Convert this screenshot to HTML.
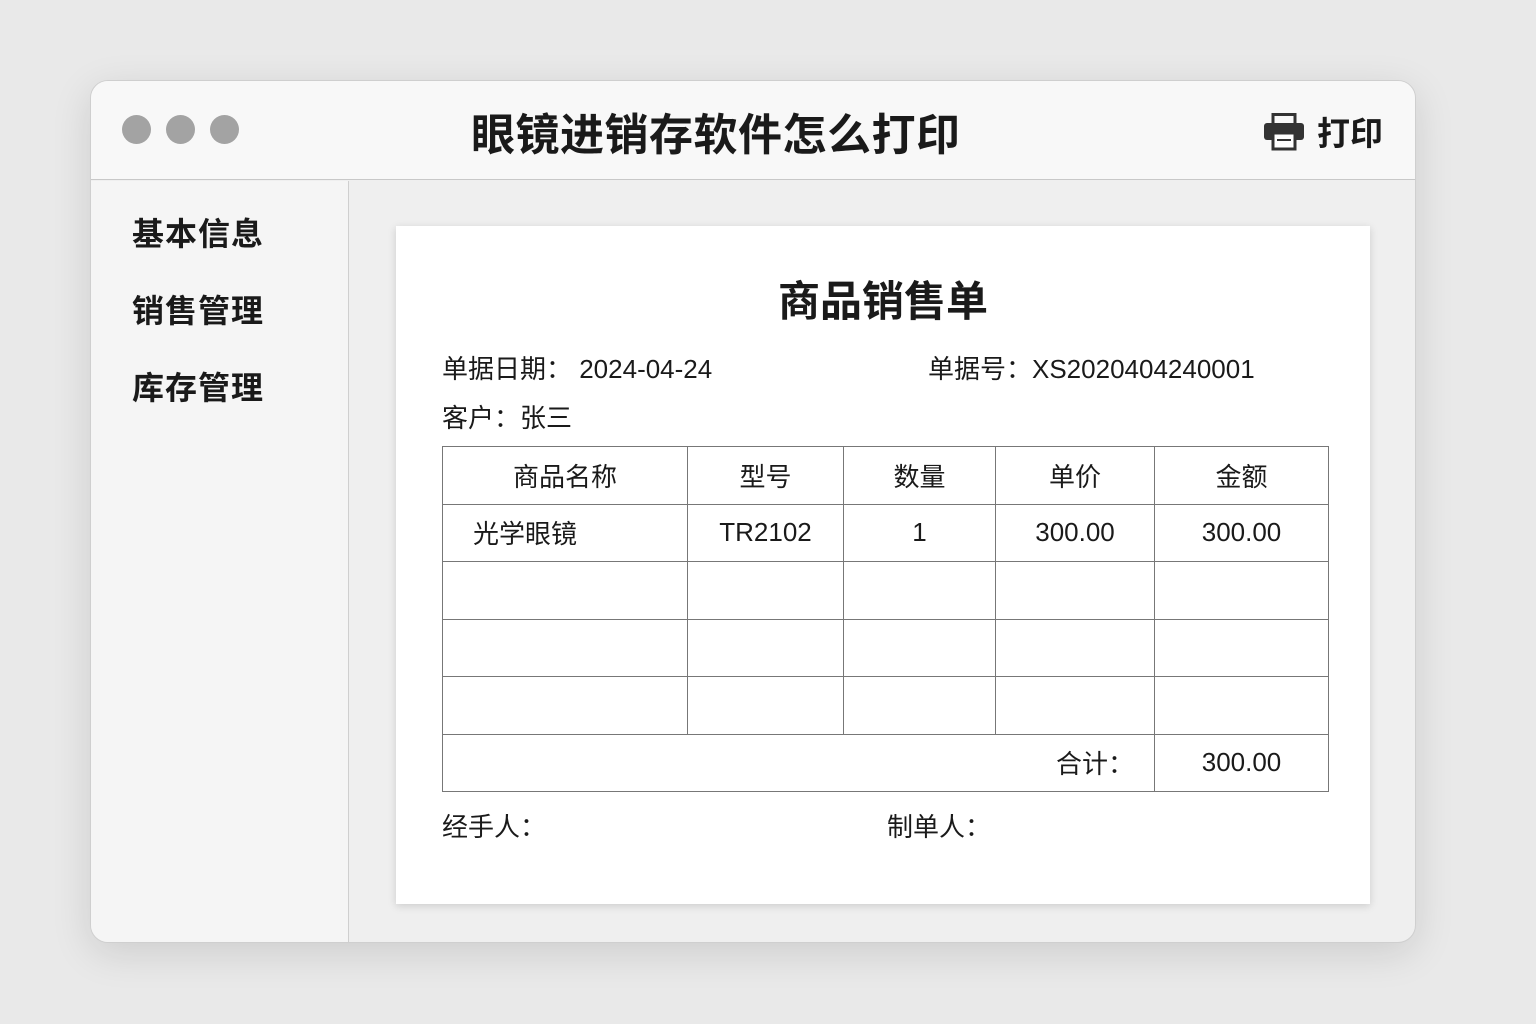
<!DOCTYPE html>
<html><head><meta charset="utf-8"><style>
*{margin:0;padding:0;box-sizing:border-box}
body{width:1536px;height:1024px;background:#e9e9e9;font-family:"Liberation Sans","Noto Sans CJK SC",sans-serif;color:#1a1a1a;position:relative;overflow:hidden}
.win{position:absolute;left:90px;top:80px;width:1326px;height:863px;border-radius:18px;background:#efefef;border:1px solid #cfcfcf;box-shadow:0 10px 40px rgba(0,0,0,.12);overflow:hidden}
.bar{position:absolute;left:0;top:0;width:100%;height:99px;background:#f8f8f8;border-bottom:1px solid #c8c8c8}
.dot{position:absolute;top:34px;width:29px;height:29px;border-radius:50%;background:#a3a3a3}
.title{position:absolute;left:380px;top:18px;font-size:44px;font-weight:bold;white-space:nowrap;letter-spacing:0.5px}
.print{position:absolute;left:1226px;top:26px;width:100px;font-size:33px;font-weight:bold;white-space:nowrap}
.print svg{position:absolute;left:-54px;top:6px}
.side{position:absolute;left:0;top:100px;width:258px;bottom:0;background:#f5f5f5;border-right:1px solid #cfcfcf}
.side div{position:absolute;left:41px;font-size:32px;font-weight:bold;letter-spacing:1px}
.paper{position:absolute;left:305px;top:145px;width:974px;height:678px;background:#fff;box-shadow:0 2px 8px rgba(0,0,0,.15)}
.t{position:absolute;font-size:26px;white-space:nowrap}
table{position:absolute;left:46px;top:220px;border-collapse:collapse;font-size:26px}
td{border:1.5px solid #777;height:57.5px;text-align:center}
</style></head><body>
<div class="win">
<div class="bar">
<div class="dot" style="left:31px"></div><div class="dot" style="left:75px"></div><div class="dot" style="left:119px"></div>
<div class="title">眼镜进销存软件怎么打印</div>
<div class="print"><svg width="42" height="38" viewBox="0 0 42 38"><rect x="10" y="1.5" width="22" height="10" fill="none" stroke="#333" stroke-width="3"/><rect x="1" y="10" width="40" height="17" rx="3" fill="#333"/><rect x="10" y="20" width="22" height="16" fill="#fff" stroke="#333" stroke-width="3"/><line x1="14" y1="27" x2="28" y2="27" stroke="#333" stroke-width="2"/></svg>打印</div>
</div>
<div class="side"><div style="top:28px">基本信息</div><div style="top:105px">销售管理</div><div style="top:182px">库存管理</div></div>
<div class="paper">
<div class="t" style="left:0;right:0;text-align:center;top:42px;font-size:42px;font-weight:bold">商品销售单</div>
<div class="t" style="left:46px;top:123px">单据日期：&nbsp;2024-04-24</div>
<div class="t" style="left:532px;top:123px">单据号：XS2020404240001</div>
<div class="t" style="left:46px;top:172px">客户：张三</div>
<table>
<tr><td style="width:245px">商品名称</td><td style="width:156px">型号</td><td style="width:152px">数量</td><td style="width:159px">单价</td><td style="width:174px">金额</td></tr>
<tr><td style="text-align:left;padding-left:30px">光学眼镜</td><td>TR2102</td><td>1</td><td>300.00</td><td>300.00</td></tr>
<tr><td></td><td></td><td></td><td></td><td></td></tr>
<tr><td></td><td></td><td></td><td></td><td></td></tr>
<tr><td></td><td></td><td></td><td></td><td></td></tr>
<tr><td colspan="4" style="text-align:right;padding-right:20px">合计：</td><td>300.00</td></tr>
</table>
<div class="t" style="left:46px;top:581px">经手人：</div>
<div class="t" style="left:491px;top:581px">制单人：</div>
</div>
</div>
</body></html>
